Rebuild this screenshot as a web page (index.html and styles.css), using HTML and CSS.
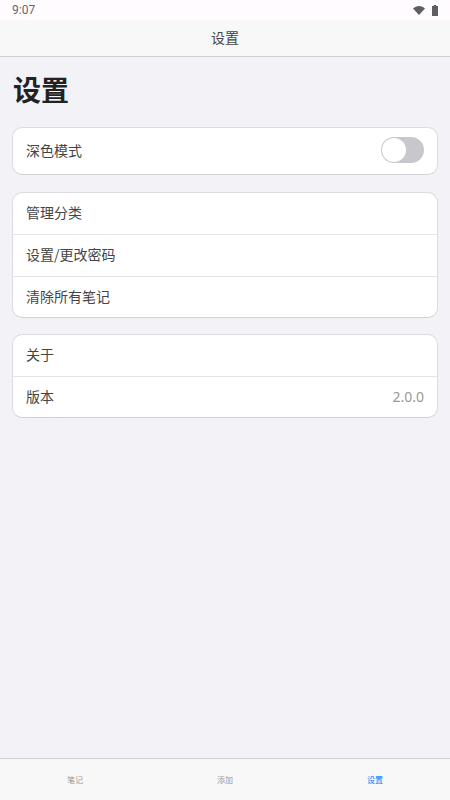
FILE: index.html
```html
<!DOCTYPE html>
<html lang="zh-CN">
<head>
  <meta charset="UTF-8">
  <meta name="viewport" content="width=device-width, initial-scale=1.0">
  <title>设置</title>
  <link rel="stylesheet" href="styles.css">
</head>
<body>

  <div class="status-bar">
    <span class="status-time">9:07</span>
    <div class="status-icons">
      <svg class="wifi-icon" width="12" height="9" viewBox="0 0 12 9"><path d="M0 2.400C1.600 .9 3.700 0 6 0s4.400 .9 6 2.400L6 9z"/></svg>
      <svg class="battery-icon" width="6" height="11" viewBox="0 0 6 11"><path d="M1.800 0h2.400v1H6v10H0V1h1.800z"/></svg>
    </div>
  </div>

  <div class="nav-bar">设置</div>

  <main class="content">
    <h1>设置</h1>

    <div class="card card-single">
      <div class="row row-tall">
        <span>深色模式</span>
        <div class="switch"><div class="switch-thumb"></div></div>
      </div>
    </div>

    <div class="card">
      <div class="row">管理分类</div>
      <div class="row">设置/更改密码</div>
      <div class="row">清除所有笔记</div>
    </div>

    <div class="card">
      <div class="row">关于</div>
      <div class="row">
        <span>版本</span>
        <span class="row-value">2.0.0</span>
      </div>
    </div>
  </main>

  <div class="tab-bar">
    <div class="tab">笔记</div>
    <div class="tab">添加</div>
    <div class="tab active">设置</div>
  </div>

</body>
</html>
```

FILE: styles.css
```css
body {
  font-family: "Noto Sans CJK SC", "Noto Sans", sans-serif;
  display: flex;
  flex-direction: column;
  height: 100vh;
  margin: 0;
  background-color: #f2f2f7;
  color: #444;
  overflow: hidden;
}

.status-bar {
  display: flex;
  justify-content: space-between;
  align-items: center;
  height: 20px;
  padding: 0 12px;
  background-color: #fffbff;
  color: #666;
}

.status-time {
  font-family: "Roboto", sans-serif;
  font-size: 12px;
}

.status-icons {
  display: flex;
  align-items: center;
  gap: 7px;
}

.status-icons svg {
  display: block;
  fill: #5f5f63;
}

.nav-bar {
  height: 36px;
  line-height: 34px;
  text-align: center;
  font-size: 14px;
  color: #444;
  background-color: #f8f8f8;
  border-bottom: 1px solid #d0d0d4;
}

.content {
  flex: 1;
  padding: 0 12px;
}

h1 {
  margin: 11px 1px 16px;
  font-size: 28px;
  line-height: 43px;
  font-weight: 700;
  color: #222;
}

.card {
  margin-bottom: 16px;
  background-color: #fff;
  border: 1px solid #dcdce0;
  border-bottom-color: #d2d2d6;
  border-radius: 10px;
  overflow: hidden;
}

.card-single {
  margin-bottom: 17px;
}

.row {
  display: flex;
  justify-content: space-between;
  align-items: center;
  box-sizing: border-box;
  height: 42px;
  padding: 0 13px 3px;
  font-size: 14px;
  border-bottom: 1px solid #e4e4e8;
}

.row:last-child {
  height: 40px;
  padding-bottom: 2px;
  border-bottom: none;
}

.row.row-tall {
  height: 46px;
  padding-bottom: 2px;
}

.row-value {
  font-family: "Noto Sans", sans-serif;
  color: #999;
}

.switch {
  width: 43px;
  height: 26px;
  border-radius: 13px;
  background-color: #c7c7cc;
  padding: 1px;
  box-sizing: border-box;
}

.switch-thumb {
  width: 24px;
  height: 24px;
  border-radius: 50%;
  background-color: #fff;
}

.tab-bar {
  display: flex;
  height: 41px;
  background-color: #f8f8f8;
  border-top: 1px solid #d0d0d4;
}

.tab {
  flex: 1;
  text-align: center;
  line-height: 42px;
  font-size: 8px;
  color: #999;
}

.tab.active {
  color: #007aff;
}
```
